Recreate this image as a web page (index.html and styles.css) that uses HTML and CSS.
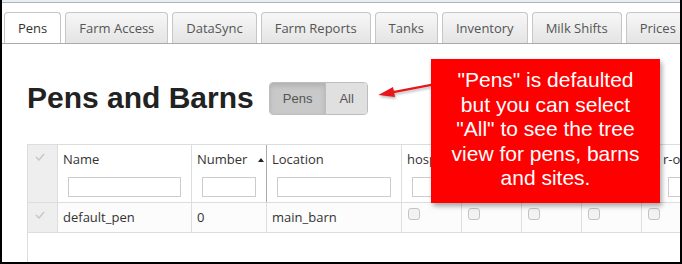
FILE: index.html
```html
<!DOCTYPE html>
<html lang="en">

<head>
    <meta charset="UTF-8">
    <title>Pens and Barns</title>
    <link rel="stylesheet" href="styles.css">
</head>

<body>
    <div class="frame">
        <div class="chrome"></div>
        <ul class="tabs">
            <li class="tab active">Pens</li>
            <li class="tab">Farm Access</li>
            <li class="tab">DataSync</li>
            <li class="tab">Farm Reports</li>
            <li class="tab">Tanks</li>
            <li class="tab">Inventory</li>
            <li class="tab">Milk Shifts</li>
            <li class="tab">Prices</li>
        </ul>
        <div class="page">
            <div class="title-row">
                <h1>Pens and Barns</h1>
                <div class="btn-group">
                    <span class="btn active">Pens</span>
                    <span class="btn">All</span>
                </div>
            </div>
            <div class="grid">
                <div class="grid-head">
                    <div class="cell chk"><svg width="10" height="8"><polyline points="1,4 4,7 9,1" /></svg></div>
                    <div class="cell c-name">Name<input type="text"></div>
                    <div class="cell c-num sorted">Number<span class="sort-up"></span><input type="text"></div>
                    <div class="cell c-loc">Location<input type="text"></div>
                    <div class="cell c-flag">hospital<input type="text"></div>
                    <div class="cell c-flag"><input type="text" class="no-label"></div>
                    <div class="cell c-flag"><input type="text" class="no-label"></div>
                    <div class="cell c-flag"><input type="text" class="no-label"></div>
                    <div class="cell c-flag">r-offsite<input type="text"></div>
                </div>
                <div class="grid-row">
                    <div class="cell chk"><svg width="10" height="8"><polyline points="1,4 4,7 9,1" /></svg></div>
                    <div class="cell c-name">default_pen</div>
                    <div class="cell c-num">0</div>
                    <div class="cell c-loc">main_barn</div>
                    <div class="cell c-bool"><span class="box"></span></div>
                    <div class="cell c-bool"><span class="box"></span></div>
                    <div class="cell c-bool"><span class="box"></span></div>
                    <div class="cell c-bool"><span class="box"></span></div>
                    <div class="cell c-bool"><span class="box"></span></div>
                </div>
            </div>
        </div>

        <!-- annotation -->
        <svg class="arrow" width="64" height="28">
            <line x1="22" y1="17.3" x2="64" y2="9.3" />
            <polygon points="8.3,20 23,12 25,22" />
        </svg>
        <div class="callout">
            "Pens" is defaulted<br>
            but you can select<br>
            "All" to see the tree<br>
            view for pens, barns<br>
            and sites.
        </div>
    </div>
</body>

</html>
```

FILE: styles.css
```css
* {
    margin: 0;
    padding: 0;
    box-sizing: border-box;
}

li {
    list-style: none;
}

body {
    background-color: #fff;
    width: 682px;
    height: 264px;
    overflow: hidden;
}

.frame {
    width: 682px;
    height: 264px;
    border-left: 2px solid #000;
    border-right: 2px solid #000;
    border-bottom: 2px solid #000;
    position: relative;
    overflow: hidden;
    display: flex;
    flex-direction: column;
}

.chrome {
    flex: none;
    height: 3px;
    background-color: #e6eef7;
    border-bottom: 1px solid #b4b4b4;
}

/* tabs */
.tabs {
    flex: none;
    display: flex;
    gap: 4px;
    padding: 9px 0 0 2px;
    border-bottom: 1px solid #aaa;
    white-space: nowrap;
}

.tab {
    flex: none;
    height: 31px;
    padding: 0 13px;
    font: 13px/30px "Open Sans", sans-serif;
    color: #555;
    border: 1px solid #c6c6c6;
    border-bottom: 0;
    border-radius: 4px 4px 0 0;
    background: linear-gradient(#f7f7f7, #e4e4e4);
}

.tab.active {
    background: #fff;
    color: #333;
}

/* page */
.page {
    flex: 1;
    min-height: 0;
    display: flex;
    flex-direction: column;
    padding-left: 25px;
}

.title-row {
    display: flex;
    align-items: center;
    gap: 15px;
    height: 36px;
    margin-top: 36px;
}

.title-row h1 {
    font: bold 30px/36px "Liberation Sans", Arial, sans-serif;
    color: #222;
}

.btn-group {
    display: flex;
    height: 33px;
    border: 1px solid #bdbdbd;
    border-radius: 4px;
    overflow: hidden;
}

.btn {
    padding: 0 13px;
    font: 13px/31px "Liberation Sans", Arial, sans-serif;
    color: #555;
    background-color: #e0e0e0;
}

.btn.active {
    background-color: #c9c9c9;
    border-right: 1px solid #bdbdbd;
    box-shadow: inset 0 3px 5px rgba(0, 0, 0, .12);
}

/* grid */
.grid {
    flex: 1;
    margin-top: 28px;
    border-left: 1px solid #ddd;
    border-top: 1px solid #ddd;
    overflow: hidden;
    font: 13px "Open Sans", sans-serif;
    color: #333;
}

.grid-head,
.grid-row {
    display: flex;
    border-bottom: 1px solid #ddd;
}

.grid-head {
    height: 58px;
    line-height: 18px;
}

.grid-row {
    height: 30px;
    line-height: 28px;
    background-color: #fcfcfc;
}

.cell {
    flex: none;
    border-right: 1px solid #ddd;
    padding-left: 5px;
    white-space: nowrap;
    overflow: hidden;
}

.grid-head .cell {
    padding-top: 5px;
}

.grid-head input {
    display: block;
    width: calc(100% - 15px);
    height: 20px;
    margin: 9px 0 0 5px;
    border: 1px solid #ccc;
    background: #fff;
}

.grid-head input.no-label {
    margin-top: 27px;
}

.chk {
    width: 30px;
    background-color: #eee;
}

.grid-head .chk,
.grid-row .chk {
    padding: 8px 0 0 7px;
    line-height: 0;
}

.chk polyline {
    fill: none;
    stroke: #c8c8c8;
    stroke-width: 1.5;
}

.c-name {
    width: 134px;
}

.c-num {
    width: 75px;
}

.grid-head .sorted {
    border-right-color: #aaa;
}

.sort-up {
    display: inline-block;
    margin: 0 0 2px 11px;
    border-left: 3px solid transparent;
    border-right: 3px solid transparent;
    border-bottom: 4px solid #222;
}

.c-loc {
    width: 135px;
}

.c-flag {
    width: 64px;
}

.c-bool {
    width: 60px;
}

.box {
    display: block;
    width: 12px;
    height: 12px;
    margin: 5px 0 0 1px;
    border: 1px solid #c4c4c4;
    border-radius: 3px;
    background-color: #f2f2f2;
}

/* annotation */
.arrow {
    position: absolute;
    left: 368px;
    top: 75px;
    filter: drop-shadow(1px 2px 1px rgba(0, 0, 0, .25));
}

.arrow line {
    stroke: #e8161b;
    stroke-width: 2.2;
}

.arrow polygon {
    fill: #e8161b;
}

.callout {
    position: absolute;
    left: 429px;
    top: 59px;
    width: 229px;
    height: 144px;
    padding-top: 9px;
    background-color: #f00;
    color: #fff;
    font: 21px/24.5px "Liberation Sans", Arial, sans-serif;
    text-align: center;
    box-shadow: 2px 3px 5px rgba(0, 0, 0, .35);
}
```
